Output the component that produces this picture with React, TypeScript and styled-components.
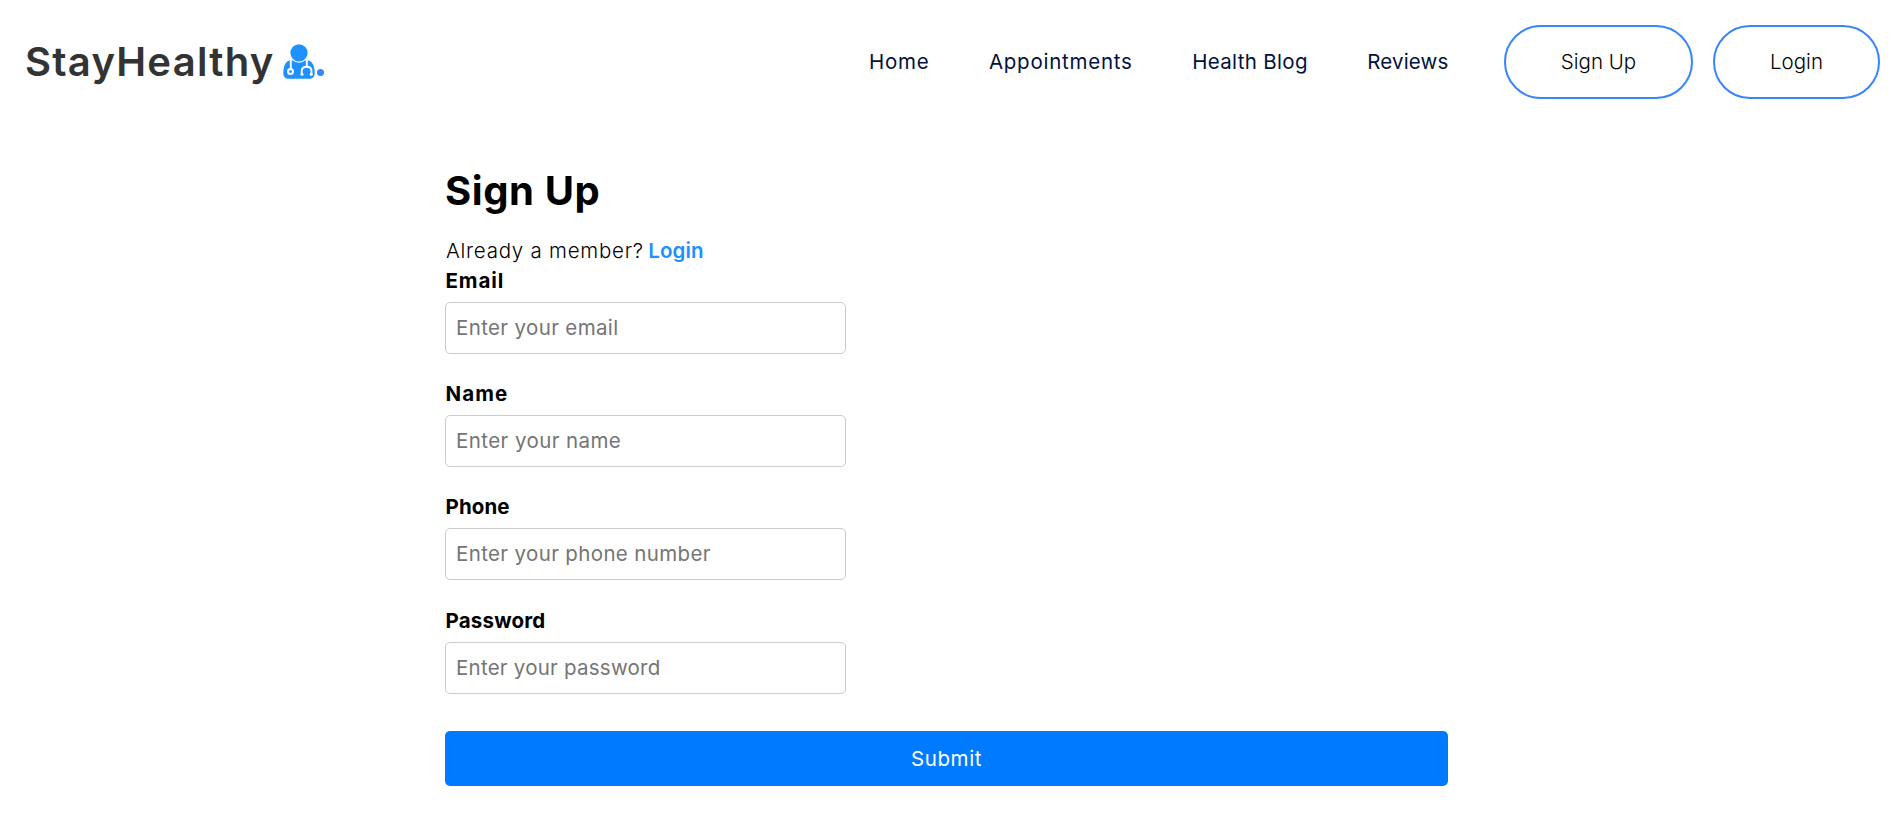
import React from "react";
import styled, { createGlobalStyle } from "styled-components";

const GlobalStyle = createGlobalStyle`
  *, *::before, *::after { box-sizing: border-box; }
  body {
    margin: 0;
    background: #fff;
    color: #000;
    font-family: Inter, "Open Sans", sans-serif;
    font-size: 20.5px;
    font-weight: 400;
    line-height: 30px;
  }
`;

const Header = styled.header`
  display: flex;
  align-items: center;
  justify-content: space-between;
  height: 124px;
  padding: 0 14px 0 25px;
`;

const Logo = styled.a`
  display: flex;
  align-items: center;
  color: #333;
  font-size: 40px;
  font-weight: 600;
  line-height: 60px;
  letter-spacing: 1.25px;
  text-decoration: none;
`;

const DoctorSvg = styled.svg`
  width: 32px;
  height: 35px;
  margin: 0 0 1px 8px;
`;

const LogoDot = styled.span`
  width: 7px;
  height: 7px;
  margin: 21px 0 0 2px;
  border-radius: 50%;
  background: #3685fb;
`;

const Nav = styled.nav`
  display: flex;
  align-items: center;
  gap: 59.5px;
`;

const NavLink = styled.a<{ $tracking: number }>`
  color: #02113a;
  font-weight: 400;
  letter-spacing: ${(p) => p.$tracking}px;
  text-decoration: none;
  white-space: nowrap;
`;

const Actions = styled.div`
  display: flex;
  gap: 20px;
  margin-left: -4px;
`;

const PillButton = styled.button<{ $width: number }>`
  width: ${(p) => p.$width}px;
  height: 74px;
  padding: 0;
  border: 2px solid #3685fb;
  border-radius: 37px;
  background: #fff;
  color: #000;
  font: inherit;
  font-weight: 350;
`;

const Main = styled.main`
  width: 1003px;
  margin: 0 auto 0 445px;
  padding-top: 37px;
`;

const Title = styled.h1`
  margin: 0;
  font-size: 40px;
  font-weight: 700;
  line-height: 60px;
  letter-spacing: 0.6px;
`;

const MemberLine = styled.p`
  display: flex;
  gap: 4.5px;
  margin: 15px 0 0 1px;
  font-weight: 350;
  letter-spacing: 0.75px;
`;

const LoginLink = styled.a`
  color: #1e90ff;
  font-weight: 600;
  letter-spacing: 0.1px;
  text-decoration: none;
`;

const Form = styled.form`
  display: flex;
  flex-direction: column;
`;

const Field = styled.div`
  display: flex;
  flex-direction: column;
  height: 113.2px;
`;

const Label = styled.label<{ $tracking: number }>`
  height: 36px;
  padding-left: 0.5px;
  font-weight: 700;
  letter-spacing: ${(p) => p.$tracking}px;
`;

const Input = styled.input<{ $tracking: number }>`
  width: 401px;
  height: 52px;
  padding: 0 10px 1px;
  border: 1px solid #ccc;
  border-radius: 5px;
  background: #fff;
  font: inherit;
  letter-spacing: ${(p) => p.$tracking}px;
  &::placeholder { color: #757575; opacity: 1; }
`;

const Submit = styled.button`
  height: 55px;
  margin-top: 12.2px;
  padding: 1px 0 0;
  border: 0;
  border-radius: 5px;
  background: #007bff;
  color: #fff;
  font: inherit;
  letter-spacing: 0.6px;
`;

const links = [
  { text: "Home", tracking: 0.75 },
  { text: "Appointments", tracking: 0.76 },
  { text: "Health Blog", tracking: 0.33 },
  { text: "Reviews", tracking: 0.15 },
];

const fields = [
  { id: "email", type: "email", label: "Email", labelTracking: 0.9, hint: "Enter your email", hintTracking: 0.36 },
  { id: "name", type: "text", label: "Name", labelTracking: 1.1, hint: "Enter your name", hintTracking: 0.42 },
  { id: "phone", type: "tel", label: "Phone", labelTracking: 0.1, hint: "Enter your phone number", hintTracking: 0.36 },
  { id: "password", type: "password", label: "Password", labelTracking: 0.2, hint: "Enter your password", hintTracking: 0.24 },
];

function DoctorIcon() {
  return (
    <DoctorSvg viewBox="0 0 32 35" aria-hidden="true">
      <path
        fill="#1e90ff"
        d="M7.5 16.3C2.5 17 .3 22.5 .3 29.2C.3 32.8 2.6 34.8 6 34.8H26C29.4 34.8 31.7 32.8 31.7 29.2C31.7 22.5 29.5 17 24.5 16.3Z"
      />
      <circle cx="16" cy="8.8" r="10" fill="#fff" />
      <circle cx="16" cy="8.8" r="8.6" fill="#1e90ff" />
      <g fill="none" stroke="#fff" strokeWidth="1.9" strokeLinecap="round">
        <path d="M7.8 16.5V24.5" />
        <path d="M23.8 16.5V22.5" />
        <path d="M18.7 30.3V27.2C18.7 24.4 20.8 22.7 23.7 22.7C26.6 22.7 28.5 24.4 28.5 27.2V30.3" />
      </g>
      <circle cx="7.5" cy="27.6" r="3.5" fill="#fff" />
      <circle cx="7.5" cy="27.6" r="1.4" fill="#1e90ff" />
      <circle cx="19" cy="30.2" r="1.5" fill="#fff" />
      <circle cx="28.2" cy="30.2" r="1.5" fill="#fff" />
    </DoctorSvg>
  );
}

export default function App() {
  return (
    <>
      <GlobalStyle />
      <Header>
        <Logo href="#">
          StayHealthy
          <DoctorIcon />
          <LogoDot />
        </Logo>
        <Nav>
          {links.map((l) => (
            <NavLink key={l.text} href="#" $tracking={l.tracking}>{l.text}</NavLink>
          ))}
          <Actions>
            <PillButton $width={189}>Sign Up</PillButton>
            <PillButton $width={167}>Login</PillButton>
          </Actions>
        </Nav>
      </Header>
      <Main>
        <Title>Sign Up</Title>
        <MemberLine>
          Already a member?
          <LoginLink href="#">Login</LoginLink>
        </MemberLine>
        <Form>
          {fields.map((f) => (
            <Field key={f.id}>
              <Label htmlFor={f.id} $tracking={f.labelTracking}>{f.label}</Label>
              <Input id={f.id} type={f.type} placeholder={f.hint} $tracking={f.hintTracking} />
            </Field>
          ))}
          <Submit type="button">Submit</Submit>
        </Form>
      </Main>
    </>
  );
}
